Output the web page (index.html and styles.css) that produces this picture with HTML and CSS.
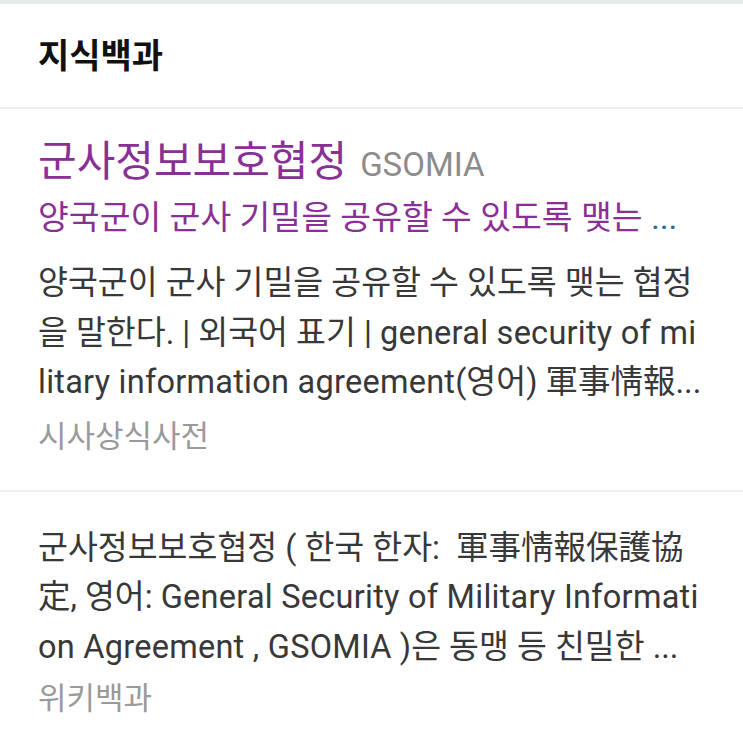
FILE: index.html
```
<!DOCTYPE html>
<html lang="ko">
<head>
<meta charset="utf-8">
<link rel="stylesheet" href="styles.css">
</head>
<body>
<div class="topbar"></div>
<div class="header"><span>지식백과</span></div>
<div class="divider"></div>
<div class="item item-first">
  <div class="title"><span class="title-main">군사정보보호협정</span><span class="title-sub">GSOMIA</span></div>
  <div class="subtitle">양국군이 군사 기밀을 공유할 수 있도록 맺는 <span class="dots">...</span></div>
  <div class="desc">
    <div class="line">양국군이 군사 기밀을 공유할 수 있도록 맺는 협정</div>
    <div class="line">을 말한다. | 외국어 표기 | <span class="en">general security of mi</span></div>
    <div class="line"><span class="en">litary information agreement</span>(영어) 軍事情報...</div>
  </div>
  <div class="source">시사상식사전</div>
</div>
<div class="divider"></div>
<div class="item item-second">
  <div class="desc">
    <div class="line">군사정보보호협정 ( 한국 한자:&nbsp; 軍事情報保護協</div>
    <div class="line">定, 영어: <span class="en">General Security of Military Informati</span></div>
    <div class="line"><span class="en">on Agreement , GSOMIA</span> )은 동맹 등 친밀한 ...</div>
  </div>
  <div class="source source-second">위키백과</div>
</div>
</body>
</html>
```
FILE: styles.css
```
html, body {
  margin: 0;
  padding: 0;
  background: #ffffff;
}
body {
  font-family: Roboto, "Noto Sans CJK KR", sans-serif;
  width: 743px;
  overflow: hidden;
}
.topbar {
  height: 4px;
  background: #e4e9ea;
}
.header {
  height: 99px;
  padding-left: 38px;
  padding-bottom: 4px;
  display: flex;
  align-items: center;
  font-size: 34px;
  font-weight: 700;
  color: #111111;
}
.divider {
  height: 2px;
  background: #efefef;
}
.item {
  padding: 0 38px;
}
.item-first {
  padding-top: 29px;
  padding-bottom: 33px;
}
.item-second {
  padding-top: 32px;
  padding-bottom: 40px;
}
.title {
  height: 48px;
  display: flex;
  align-items: baseline;
  white-space: nowrap;
}
.title-main {
  font-size: 42px;
  line-height: 48px;
  color: #8a2f96;
}
.title-sub {
  font-size: 33px;
  line-height: 48px;
  color: #8c8c8c;
  margin-left: 13px;
}
.subtitle {
  margin-top: 12px;
  height: 40px;
  line-height: 40px;
  font-size: 33.5px;
  color: #8a2f96;
  white-space: nowrap;
}
.dots {
  color: #2b6ca0;
}
.desc {
  margin-top: 21px;
  font-size: 32.5px;
  color: #383838;
}
.line {
  height: 49.5px;
  line-height: 49.5px;
  white-space: nowrap;
}
.en {
  letter-spacing: 0.25px;
}
.item-second .desc {
  margin-top: 0;
}
.source {
  margin-top: 9px;
  height: 40px;
  font-size: 31px;
  line-height: 40px;
  color: #9a9a9a;
}
.source-second {
  margin-top: 7px;
}
```
